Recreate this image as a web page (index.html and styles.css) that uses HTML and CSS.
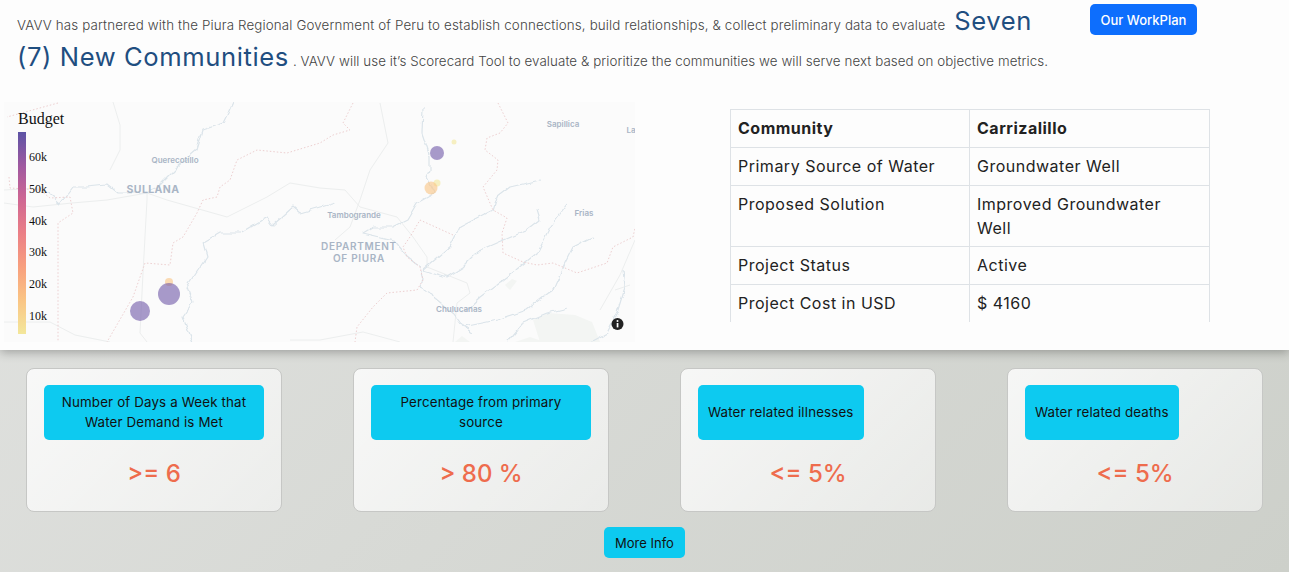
FILE: index.html
```html
<!DOCTYPE html>
<html lang="en">
<head>
    <meta charset="UTF-8">
    <meta name="viewport" content="width=device-width, initial-scale=1.0">
    <title>Community Evaluation</title>
    <link rel="stylesheet" href="styles.css">
</head>
<body>
    <section class="top-panel">
        <div class="intro">
            <p class="intro-text">VAVV has partnered with the Piura Regional Government of Peru to establish connections, build relationships, &amp; collect preliminary data to evaluate <span class="highlight">Seven (7) New Communities</span> <span class="intro-rest">. VAVV will use it’s Scorecard Tool to evaluate &amp; prioritize the communities we will serve next based on objective metrics.</span></p>
            <button type="button" class="workplan-button">Our WorkPlan</button>
        </div>

        <div class="details">
            <!-- map is a free canvas, coordinates below are in page pixels -->
            <svg class="map" viewBox="4 102 631 240" width="631" height="240">
                <defs>
                    <linearGradient id="budget-scale" x1="0" y1="0" x2="0" y2="1">
                        <stop offset="0" stop-color="#5c53a5"/>
                        <stop offset="0.17" stop-color="#a059a0"/>
                        <stop offset="0.33" stop-color="#ce6693"/>
                        <stop offset="0.5" stop-color="#eb7f86"/>
                        <stop offset="0.67" stop-color="#f8a07e"/>
                        <stop offset="0.83" stop-color="#fac484"/>
                        <stop offset="1" stop-color="#f3e79b"/>
                    </linearGradient>
                    <filter id="wiggle" x="0" y="0" width="100%" height="100%" filterUnits="objectBoundingBox">
                        <feTurbulence type="fractalNoise" baseFrequency="0.09" numOctaves="2" seed="4"/>
                        <feDisplacementMap in="SourceGraphic" scale="6" xChannelSelector="R" yChannelSelector="G"/>
                    </filter>
                </defs>

                <path class="patch" d="M533 320L548 313L575 315L592 322L600 342L540 342ZM505 285L512 279L517 281L510 290ZM455 342L462 336L470 342ZM515 342L530 337L545 342Z"/>

                <g class="roads">
                    <path d="M4 203L33 207L72 203L107 200L147 193L167 200L227 217L267 197L290 183L320 188L345 190L360 207L397 217L413 237L427 257L427 267L467 283L470 293L457 303L453 342"/>
                    <path d="M147 193L147 200L143 273L140 333L147 342"/>
                    <path d="M4 190L43 188M113 102L120 125L120 150L110 170"/>
                    <path d="M380 103L388 143L370 170L360 200L350 227L335 240"/>
                    <path d="M4 322L50 322L75 335L110 342M290 340L320 340L363 332L400 342"/>
                    <path d="M615 290L630 285M635 240L620 275L600 310"/>
                </g>

                <g class="rivers">
                    <path d="M233 102L228 113L223 123L203 130L197 150L177 167L157 187L147 193L117 193L107 185L87 187L72 187L60 203L43 188"/>
                    <path d="M335 203L300 213L293 207L273 225L267 217L240 233L220 233L203 243L207 257L187 287L193 303L183 317L193 342"/>
                    <path d="M423 108L422 133L430 157L430 170L427 177L435 193L417 203L407 220L393 227L373 227L363 233L393 240L407 257L420 267L423 280L420 287L433 293L437 300L453 313L463 327L473 333"/>
                    <path d="M540 180L510 187L497 197L493 210L460 227L450 247L423 270"/>
                    <path d="M537 210L540 220L527 230L503 240L480 250L463 267L447 277L423 270"/>
                    <path d="M568 203L550 227L537 253L507 277L480 297L463 313"/>
                    <path d="M593 237L573 247L563 267L553 290L527 310L497 320L463 327"/>
                    <path d="M568 308L547 313L523 323L507 342"/>
                    <path d="M623 270L625 287L617 313L607 333L590 342"/>
                </g>

                <g class="borders">
                    <path d="M58 103L7 117M9 177L10 188L40 190L50 198L70 197L73 213L58 223L58 342"/>
                    <path d="M353 103L343 123L350 130L333 135L320 143L287 153L257 150L237 160L230 180L220 187L217 197L203 200L197 213L183 237L173 243L170 265L145 263L133 297L107 342"/>
                    <path d="M498 103L508 123L500 133L487 138L485 150L498 160L497 170L483 187L493 210L507 218L502 233L503 253L523 262L537 265L553 263L577 273L607 263L613 247L633 237L635 228"/>
                    <path d="M453 235L420 220L410 237L403 247L407 257L420 267L423 280L417 290L387 293L373 307L357 327L355 342"/>
                </g>

                <text class="place" x="175" y="163">Querecotillo</text>
                <text class="place place-large" x="153" y="193">SULLANA</text>
                <text class="place" x="563" y="127">Sapillica</text>
                <text class="place" x="631" y="133">La</text>
                <text class="place" x="354" y="218">Tambogrande</text>
                <text class="place" x="584" y="216">Frias</text>
                <text class="place place-region" x="359" y="250">DEPARTMENT</text>
                <text class="place place-region" x="359" y="262">OF PIURA</text>
                <text class="place" x="459" y="312">Chulucanas</text>

                <circle class="dot dot-orange" cx="169" cy="282" r="4"/>
                <circle class="dot dot-purple" cx="169" cy="294" r="11"/>
                <circle class="dot dot-purple" cx="140" cy="311" r="10"/>
                <circle class="dot dot-purple" cx="437" cy="153" r="7"/>
                <circle class="dot dot-yellow" cx="454" cy="142" r="2.5"/>
                <circle class="dot dot-yellow" cx="437" cy="183" r="3.5"/>
                <circle class="dot dot-orange" cx="431" cy="188" r="6.5"/>

                <text class="legend-title" x="18" y="124">Budget</text>
                <rect x="18" y="132" width="8" height="202" fill="url(#budget-scale)"/>
                <text class="legend-tick" x="29" y="161">60k</text>
                <text class="legend-tick" x="29" y="193">50k</text>
                <text class="legend-tick" x="29" y="225">40k</text>
                <text class="legend-tick" x="29" y="256">30k</text>
                <text class="legend-tick" x="29" y="288">20k</text>
                <text class="legend-tick" x="29" y="320">10k</text>

                <circle cx="617.5" cy="324" r="6" fill="#222"/>
                <rect x="616.7" y="323" width="1.7" height="4.4" fill="#fff"/>
                <circle cx="617.5" cy="321" r="1" fill="#fff"/>
            </svg>

            <div class="table-wrap">
                <table class="info-table">
                    <tr><th>Community</th><th>Carrizalillo</th></tr>
                    <tr><td>Primary Source of Water</td><td>Groundwater Well</td></tr>
                    <tr><td>Proposed Solution</td><td>Improved Groundwater Well</td></tr>
                    <tr><td>Project Status</td><td>Active</td></tr>
                    <tr><td>Project Cost in USD</td><td>$ 4160</td></tr>
                </table>
            </div>
        </div>
    </section>

    <section class="criteria">
        <div class="card">
            <div class="card-label">Number of Days a Week that Water Demand is Met</div>
            <div class="card-value">&gt;= 6</div>
        </div>
        <div class="card">
            <div class="card-label">Percentage from primary source</div>
            <div class="card-value">&gt; 80 %</div>
        </div>
        <div class="card">
            <div class="card-label">Water related illnesses</div>
            <div class="card-value">&lt;= 5%</div>
        </div>
        <div class="card">
            <div class="card-label">Water related deaths</div>
            <div class="card-value">&lt;= 5%</div>
        </div>
    </section>

    <div class="more">
        <button type="button" class="more-button">More Info</button>
    </div>
</body>
</html>
```
FILE: styles.css
```css
* {
    box-sizing: border-box;
}

html, body {
    height: 100%;
}

body {
    margin: 0;
    overflow: hidden;
    font-family: Inter, "Open Sans", sans-serif;
    background: linear-gradient(135deg, #e2e3e1 0%, #cdd0ca 100%);
    color: #222;
}

.top-panel {
    height: 350px;
    background: #fdfdfd;
    box-shadow: 0 2px 10px rgba(0, 0, 0, 0.3);
}

.intro {
    display: flex;
    align-items: flex-start;
    height: 102px;
    padding: 4px 0 0 17px;
}

.intro-text {
    width: 1073px;
    margin: 0;
    padding-top: 3px;
    padding-right: 20px;
    font-size: 13.33px;
    font-weight: 300;
    letter-spacing: 0.15px;
    line-height: 36px;
    color: #444;
}

.intro-rest {
    letter-spacing: 0.08px;
}

.highlight {
    margin-left: 5px;
    font-size: 25.6px;
    font-weight: 400;
    letter-spacing: 0.6px;
    line-height: 20px;
    color: #1f4e80;
}

.workplan-button {
    width: 107px;
    height: 31px;
    border: none;
    border-radius: 5px;
    background: #0d6efd;
    color: #fff;
    font-family: inherit;
    font-size: 13px;
    font-weight: 500;
}

.details {
    display: flex;
    align-items: flex-start;
    padding-left: 4px;
}

.map {
    display: block;
    flex: none;
    background: #fbfbfb;
}

.patch {
    fill: #f3f5f3;
}

.roads path, .rivers path, .borders path {
    fill: none;
    stroke-linejoin: round;
}

.roads path {
    stroke: #eceeee;
    stroke-width: 1;
}

.rivers {
    filter: url(#wiggle);
}

.rivers path {
    stroke: #dbe4ea;
    stroke-width: 1.2;
}

.borders path {
    stroke: #edcfd0;
    stroke-width: 1;
    stroke-dasharray: 1.5 2;
}

.place {
    fill: #a9b5c5;
    font-size: 8px;
    font-weight: 600;
    text-anchor: middle;
}

.place-large {
    font-size: 10.5px;
    font-weight: 700;
    letter-spacing: 0.4px;
}

.place-region {
    font-size: 10px;
    letter-spacing: 0.7px;
}

.dot {
    fill-opacity: 0.6;
}

.dot-purple {
    fill: #6f58a8;
}

.dot-yellow {
    fill: #f3e79b;
}

.dot-orange {
    fill: #fac484;
}

.legend-title, .legend-tick {
    font-family: "Liberation Serif", serif;
    fill: #111;
}

.legend-title {
    font-size: 16px;
}

.legend-tick {
    font-size: 12px;
}

.table-wrap {
    width: 480px;
    height: 213px;
    margin: 7px 0 0 95px;
    overflow: hidden;
}

.info-table {
    width: 100%;
    table-layout: fixed;
    border-collapse: collapse;
    font-size: 16px;
    letter-spacing: 0.5px;
    line-height: 24px;
    color: #222;
}

.info-table th, .info-table td {
    padding: 6px 24px 6.8px 7px;
    border: 1px solid #dee2e6;
    text-align: left;
    vertical-align: top;
}

.info-table th {
    font-weight: 700;
}

.info-table td:first-child, .info-table th:first-child {
    width: 239px;
}

.criteria {
    display: grid;
    grid-template-columns: repeat(4, 256px);
    gap: 71px;
    margin-top: 18px;
    padding-left: 26px;
}

.card {
    height: 144px;
    padding: 16px 17px;
    border: 1px solid #c6c7c5;
    border-radius: 8px;
    background: linear-gradient(135deg, rgba(255, 255, 255, 0.8) 0%, rgba(255, 255, 255, 0.5) 100%);
}

.card-label {
    display: table-cell;
    height: 55px;
    max-width: 220px;
    padding: 6px 10px 8px;
    border-radius: 5px;
    background: #0dcaf0;
    color: #111;
    font-size: 13.33px;
    letter-spacing: 0.15px;
    line-height: 20px;
    text-align: center;
    vertical-align: middle;
}

.card-value {
    margin-top: 16px;
    font-size: 24px;
    font-weight: 500;
    line-height: 36px;
    text-align: center;
    color: #ee6c4d;
}

.more {
    display: flex;
    justify-content: center;
    margin-top: 15px;
}

.more-button {
    width: 81px;
    height: 31px;
    border: none;
    border-radius: 5px;
    background: #0dcaf0;
    color: #111;
    font-family: inherit;
    font-size: 13px;
}
```
